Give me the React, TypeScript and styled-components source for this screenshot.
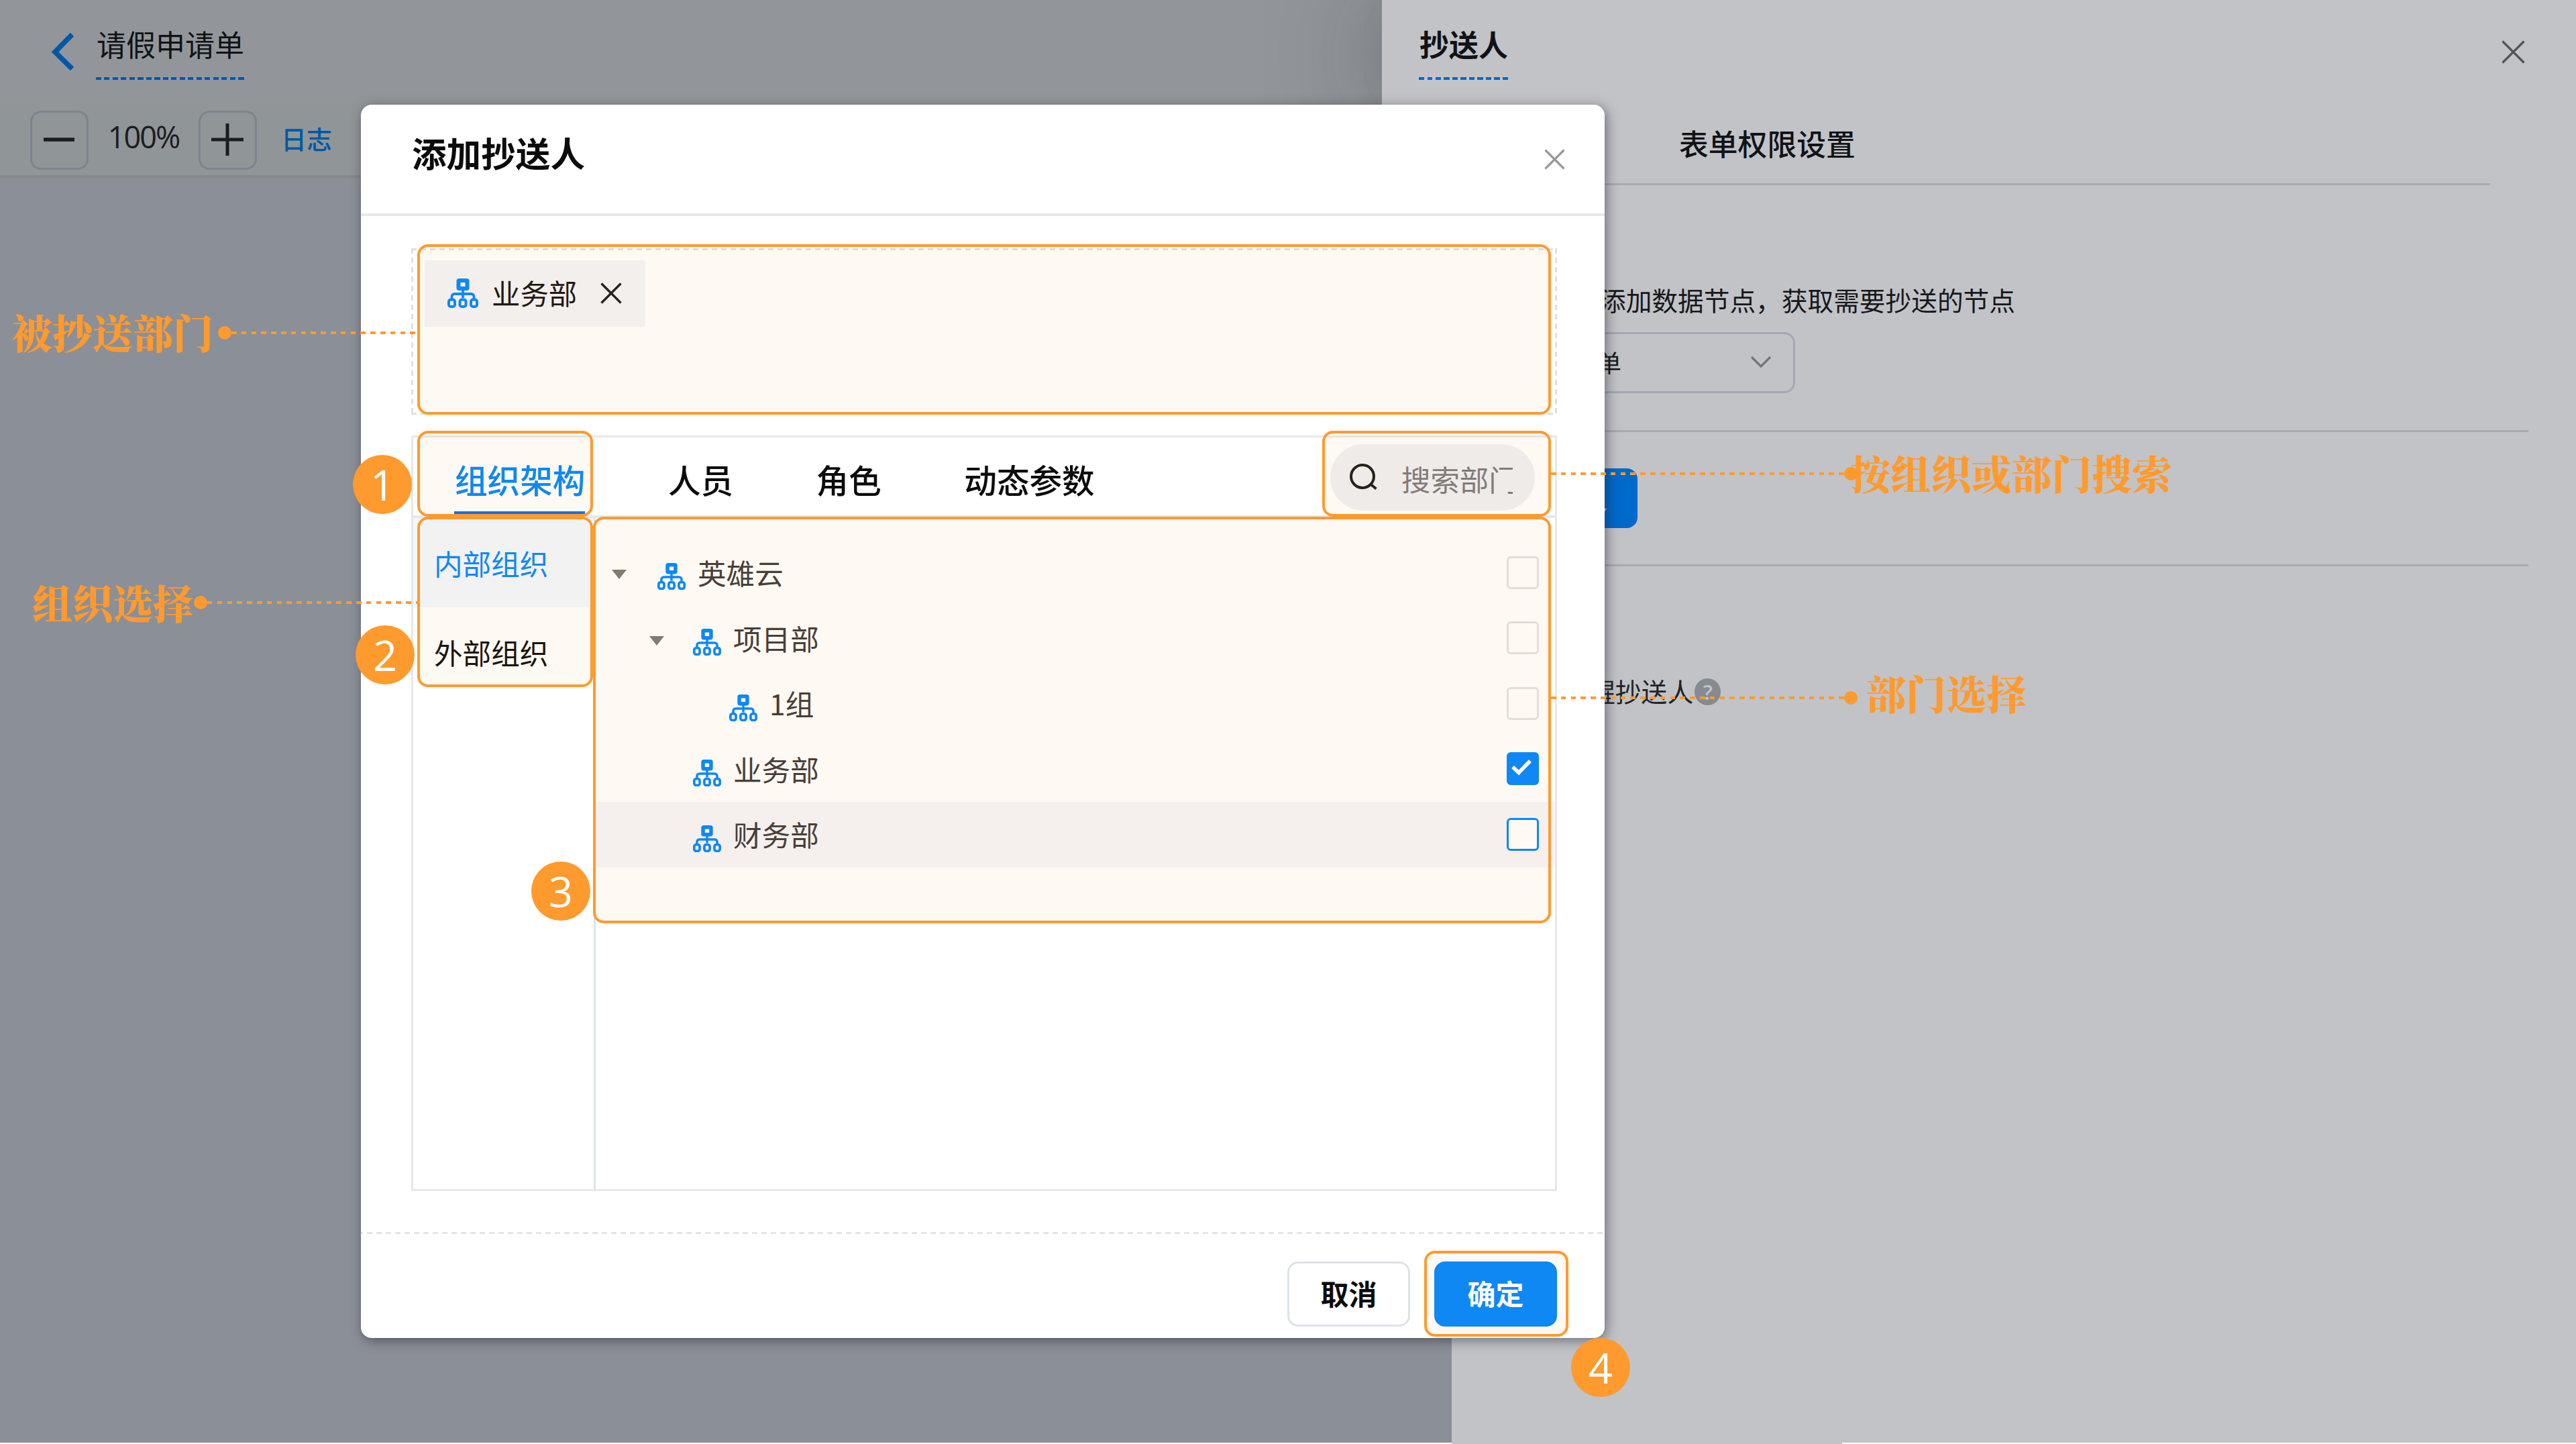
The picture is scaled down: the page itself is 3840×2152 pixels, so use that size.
import React from 'react';
import styled, { createGlobalStyle, css } from 'styled-components';

const SANS = '"Noto Sans CJK SC", "Noto Sans", sans-serif';
const LATIN = '"Open Sans", "Noto Sans", sans-serif';
const SERIF = '"Noto Serif CJK SC", "Noto Serif SC", "Source Han Serif SC", "Noto Sans CJK SC", serif';
const ORANGE = '#ff9a2e';
const BLUE = '#0087ff';

const Global = createGlobalStyle`
  * { box-sizing: border-box; }
  body { margin: 0; background: #fff; font-family: ${SANS}; overflow: hidden; }
`;

const dashedX = (color: string, on: number, off: number) =>
  `repeating-linear-gradient(90deg, ${color} 0 ${on}px, transparent ${on}px ${on + off}px)`;
const dashedY = (color: string, on: number, off: number) =>
  `repeating-linear-gradient(180deg, ${color} 0 ${on}px, transparent ${on}px ${on + off}px)`;

const Stage = styled.div`
  position: relative;
  width: 3840px;
  height: 2152px;
  overflow: hidden;
`;

/* ---------- designer page ---------- */

const Designer = styled.div`
  display: flex;
  flex-direction: column;
  height: 2150px;
  background: #8b8f97;
`;

const DesignerHeader = styled.header`
  display: flex;
  align-items: flex-start;
  height: 155px;
  padding-left: 76px;
  background: #92969a;
`;

const BackIcon = styled.svg`
  width: 34px;
  height: 58px;
  margin: 48px 33px 0 0;
`;

const EditableTitle = styled.div<{ $bold?: boolean; $color: string }>`
  height: 119px;
  padding: 39px 1px 0;
  font-size: 44px;
  line-height: 52px;
  font-weight: ${(p) => (p.$bold ? 700 : 400)};
  color: #101316;
  white-space: nowrap;
  background: ${(p) => dashedX(p.$color, 8, 4.5)} left bottom / 100% 4px no-repeat;
`;

const Toolbar = styled.div`
  display: flex;
  align-items: flex-start;
  height: 110px;
  padding: 10px 0 0 45px;
  background: #909598;
  border-bottom: 4px solid #85898c;
`;

const ZoomButton = styled.button`
  display: flex;
  align-items: center;
  justify-content: center;
  width: 87px;
  height: 88px;
  padding: 0 2px 2px 0;
  background: transparent;
  border: 3px solid #7f838d;
  border-radius: 16px;
`;

const ZoomValue = styled.span`
  width: 164px;
  font-family: ${LATIN};
  font-size: 45px;
  letter-spacing: -2px;
  line-height: 78px;
  text-align: center;
  color: #1a1d20;
`;

const LogLink = styled.a`
  margin-left: 36px;
  font-size: 38px;
  line-height: 82px;
  font-weight: 500;
  color: #0057a6;
`;

/* ---------- right drawer ---------- */

const Drawer = styled.aside`
  position: absolute;
  top: 0;
  right: 0;
  display: flex;
  flex-direction: column;
  width: 1780px;
  height: 2152px;
`;

const DrawerHead = styled.div`
  display: flex;
  justify-content: space-between;
  align-items: flex-start;
  flex: none;
  height: 160px;
  padding: 0 76px 0 55px;
  background: #c2c3c7;
  box-shadow: 0 0 170px rgba(20, 20, 30, 0.38);
`;

const DrawerBody = styled.div`
  display: flex;
  flex-direction: column;
  flex: none;
  height: 1990px;
  margin-left: 104px;
  padding-right: 71px;
  background: #c2c3c7;
`;

const DrawerEdge = styled.div`
  flex: none;
  width: 582px;
  height: 2px;
  margin-left: 104px;
  background: #c2c3c7;
`;

const DrawerTabs = styled.div`
  height: 116px;
  margin-right: 57px;
  padding: 23px 0 0 339px;
  border-bottom: 3px solid #a8aaaf;
  font-size: 43.8px;
  line-height: 60px;
  font-weight: 500;
  color: #101316;
`;

const DrawerSection = styled.section<{ $height: number; $line?: boolean }>`
  height: ${(p) => p.$height}px;
  ${(p) => p.$line && css`border-bottom: 3px solid #a7aab4;`}
`;

const Hint = styled.p`
  margin: 0;
  padding: 140px 0 0 221px;
  font-size: 38.7px;
  line-height: 60px;
  color: #15181b;
  white-space: nowrap;
`;

const SelectBox = styled.div`
  display: flex;
  align-items: center;
  justify-content: space-between;
  width: 512px;
  height: 91px;
  margin-top: 19px;
  padding: 0 32px 3px 214px;
  border: 3px solid #a3a8b2;
  border-radius: 16px;
  font-size: 36px;
  color: #15181b;
`;

const AddButton = styled.button`
  width: 277px;
  height: 89px;
  margin: 54px 0 0;
  padding: 0 45px 0 0;
  border: 0;
  border-radius: 16px;
  background: #0069cc;
  font: 500 38px ${SANS};
  color: #b9c6d4;
  text-align: right;
`;

const RemindRow = styled.div`
  display: flex;
  align-items: center;
  padding: 155px 0 0 205px;
  font-size: 38.8px;
  line-height: 60px;
  color: #202327;
`;

const HelpDot = styled.span`
  display: flex;
  align-items: center;
  justify-content: center;
  width: 39px;
  height: 40px;
  margin: 3px 0 0 2px;
  border-radius: 50%;
  background: #868b92;
  font: 600 31px ${LATIN};
  color: #c2c3c7;
`;

/* ---------- modal ---------- */

const Modal = styled.div`
  position: absolute;
  left: 538px;
  top: 156px;
  display: flex;
  flex-direction: column;
  width: 1854px;
  height: 1838px;
  background: #fff;
  border-radius: 16px;
  box-shadow: 3px 4px 18px rgba(30, 28, 40, 0.5);
`;

const ModalHead = styled.div`
  display: flex;
  justify-content: space-between;
  align-items: flex-start;
  height: 166px;
  padding: 0 59px 0 76px;
  border-bottom: 4px solid #e8e8e8;
`;

const ModalTitle = styled.h1`
  margin: 41px 0 0;
  font-size: 51.6px;
  line-height: 60px;
  font-weight: 700;
  color: #0c0c0c;
`;

const CloseIcon = styled.svg<{ $size: number; $top: number; $color: string; $weight: number }>`
  flex: none;
  width: ${(p) => p.$size}px;
  height: ${(p) => p.$size}px;
  margin-top: ${(p) => p.$top}px;
  stroke: ${(p) => p.$color};
  stroke-width: ${(p) => p.$weight};
  fill: none;
`;

const ModalBody = styled.div`
  display: flex;
  flex-direction: column;
  height: 1514px;
  padding: 48px 71px 0 75px;
`;

const SelectedBox = styled.div`
  display: flex;
  align-items: flex-start;
  height: 248px;
  padding: 18px 20px;
  background:
    ${dashedX('#e0e0e0', 8, 6)} left top / 100% 3px no-repeat,
    ${dashedX('#e0e0e0', 8, 6)} left bottom / 100% 3px no-repeat,
    ${dashedY('#e0e0e0', 8, 6)} left top / 3px 100% no-repeat,
    ${dashedY('#e0e0e0', 8, 6)} right top / 3px 100% no-repeat;
`;

const Tag = styled.div`
  display: flex;
  align-items: center;
  height: 99px;
  padding: 0 35px 1px 34px;
  background: #f3f5f9;
  font-size: 42.4px;
  color: #111;
`;

const TagText = styled.span`
  margin: -3px 35px 0 20px;
`;

const Picker = styled.div`
  display: flex;
  flex-direction: column;
  height: 1126px;
  margin-top: 31px;
  border: 3px solid #e8e8e8;
`;

const TabBar = styled.div`
  display: flex;
  align-items: flex-start;
  flex: none;
  height: 120px;
  padding: 0 30px 0 61px;
  border-bottom: 4px solid #e4e8ee;
`;

const Tab = styled.div<{ $active?: boolean }>`
  height: 115px;
  margin-right: 122.5px;
  padding: 38px 0 0 1px;
  font-size: 48.6px;
  line-height: 48px;
  font-weight: 500;
  color: ${(p) => (p.$active ? BLUE : '#0c0c0c')};
  border-bottom: 5px solid ${(p) => (p.$active ? '#0071f2' : 'transparent')};
  white-space: nowrap;
`;

const SearchPill = styled.div`
  display: flex;
  align-items: flex-start;
  width: 305px;
  height: 99px;
  margin: 10px 0 0 auto;
  padding: 28px 0 0 28px;
  border-radius: 50px;
  background: #eff1f5;
`;

const SearchText = styled.span`
  width: 166px;
  margin-left: 36px;
  overflow: hidden;
  font-size: 43.4px;
  line-height: 52px;
  margin-top: -3px;
  color: #7b7b7d;
  white-space: nowrap;
`;

const PickerBody = styled.div`
  display: flex;
  flex: 1;
`;

const SideNav = styled.nav`
  width: 272px;
  border-right: 3px solid #dde3ea;
`;

const SideItem = styled.div<{ $active?: boolean }>`
  height: 133px;
  padding-left: 31px;
  font-size: 42.6px;
  line-height: 133px;
  color: ${(p) => (p.$active ? BLUE : '#0c0c0c')};
  background: ${(p) => (p.$active ? '#f2f8fe' : 'transparent')};
`;

const Tree = styled.div`
  flex: 1;
  padding-top: 33px;
`;

const TreeRow = styled.div<{ $level: number; $hover?: boolean }>`
  display: flex;
  align-items: center;
  height: 97.5px;
  padding: 0 24px 0 ${(p) => 24 + p.$level * 54}px;
  background: ${(p) => (p.$hover ? '#f5f6fa' : 'transparent')};
`;

const ArrowSlot = styled.span<{ $nested?: boolean }>`
  display: flex;
  width: ${(p) => (p.$nested ? 67 : 68)}px;
  padding: ${(p) => (p.$nested ? '8px 0 0 2px' : '4px 0 0')};
`;

const Caret = styled.i`
  border: 11.5px solid transparent;
  border-top: 14px solid #7c7976;
  border-bottom: 0;
`;

const TreeLabel = styled.span`
  flex: 1;
  margin: -2px 0 0 18px;
  font-size: 42.6px;
  color: #3c3a3a;
`;

const OrgSvg = styled.svg<{ $w: number; $drop: number }>`
  flex: none;
  width: ${(p) => p.$w}px;
  height: ${(p) => (p.$w * 44) / 46}px;
  margin-top: ${(p) => p.$drop}px;
  fill: none;
  stroke: ${BLUE};
`;

const Check = styled.span<{ $state: 'off' | 'on' | 'hover' }>`
  display: flex;
  align-items: center;
  justify-content: center;
  width: 48px;
  height: 49px;
  margin-top: -1px;
  padding: 0 2px 2px 0;
  border: 3px solid ${(p) => (p.$state === 'off' ? '#e2e2e6' : BLUE)};
  border-radius: 6px;
  background: ${(p) => (p.$state === 'on' ? BLUE : '#fff')};
`;

const ModalFoot = styled.div`
  display: flex;
  justify-content: flex-end;
  gap: 36px;
  height: 158px;
  padding: 44px 71px 0 0;
  background: ${dashedX('#e4e4e4', 8, 6)} -5px 0 / calc(100% + 14px) 3px no-repeat;
`;

const Button = styled.button<{ $primary?: boolean }>`
  width: 183px;
  height: 97px;
  padding: 0 0 5px;
  border: 3px solid ${(p) => (p.$primary ? BLUE : '#dde1e8')};
  border-radius: 16px;
  background: ${(p) => (p.$primary ? BLUE : '#fff')};
  color: ${(p) => (p.$primary ? '#fff' : '#0c0c0c')};
  font: 700 42px ${SANS};
`;

/* ---------- guide annotations ---------- */

const Frame = styled.div<{ $x: number; $y: number; $w: number; $h: number }>`
  position: absolute;
  left: ${(p) => p.$x}px;
  top: ${(p) => p.$y}px;
  width: ${(p) => p.$w}px;
  height: ${(p) => p.$h}px;
  border: 4px solid ${ORANGE};
  border-radius: 16px;
  background: rgba(255, 154, 46, 0.06);
`;

const Step = styled.div<{ $x: number; $y: number }>`
  position: absolute;
  left: ${(p) => p.$x}px;
  top: ${(p) => p.$y}px;
  width: 88px;
  height: 88px;
  border-radius: 50%;
  background: ${ORANGE};
  font: 400 63px/87px ${LATIN};
  color: #fff;
  text-align: center;
`;

const Callout = styled.div<{ $x: number; $y: number }>`
  position: absolute;
  left: ${(p) => p.$x}px;
  top: ${(p) => p.$y}px;
  font: 900 60px/60px ${SERIF};
  color: ${ORANGE};
  white-space: nowrap;
`;

const Leader = styled.div<{ $x: number; $y: number; $w: number; $dotRight?: boolean }>`
  position: absolute;
  left: ${(p) => p.$x}px;
  top: ${(p) => p.$y}px;
  display: flex;
  flex-direction: ${(p) => (p.$dotRight ? 'row-reverse' : 'row')};
  align-items: center;
  width: ${(p) => p.$w}px;
  height: 20px;

  &::before {
    content: '';
    width: 20px;
    height: 20px;
    border-radius: 50%;
    background: ${ORANGE};
  }
  &::after {
    content: '';
    flex: 1;
    height: 4px;
    background: ${dashedX(ORANGE, 7.5, 7.3)};
  }
`;

const OrgIcon = ({ w, drop = 0 }: { w: number; drop?: number }) => (
  <OrgSvg $w={w} $drop={drop} viewBox="0 0 46 44">
    <rect x="16.5" y="3" width="13" height="12" rx="1" strokeWidth="6" />
    <path d="M23 17v12M6.5 30v-3a4 4 0 0 1 4-4h25a4 4 0 0 1 4 4v3" strokeWidth="3.8" />
    <rect x="2" y="31.5" width="9" height="10.5" rx="3" strokeWidth="4" />
    <rect x="18.5" y="31.5" width="9" height="10.5" rx="3" strokeWidth="4" />
    <rect x="35" y="31.5" width="9" height="10.5" rx="3" strokeWidth="4" />
  </OrgSvg>
);

const Cross = (p: { size: number; top?: number; color: string; weight: number }) => (
  <CloseIcon $size={p.size} $top={p.top ?? 0} $color={p.color} $weight={p.weight} viewBox={`0 0 ${p.size} ${p.size}`}>
    <path d={`M1.5 1.5L${p.size - 1.5} ${p.size - 1.5}M${p.size - 1.5} 1.5L1.5 ${p.size - 1.5}`} />
  </CloseIcon>
);

type Node = { label: string; level: number; open?: boolean; check: 'off' | 'on' | 'hover' };

const nodes: Node[] = [
  { label: '英雄云', level: 0, open: true, check: 'off' },
  { label: '项目部', level: 1, open: true, check: 'off' },
  { label: '1组', level: 2, check: 'off' },
  { label: '业务部', level: 1, check: 'on' },
  { label: '财务部', level: 1, check: 'hover' },
];

export default function App() {
  return (
    <Stage>
      <Global />
      <Designer>
        <DesignerHeader>
          <BackIcon viewBox="0 0 34 58">
            <path d="M31.5 3.5L6 29.5L31.5 54.5" fill="none" stroke="#0057a6" strokeWidth="7.5" />
          </BackIcon>
          <EditableTitle $color="#0057a6">请假申请单</EditableTitle>
        </DesignerHeader>
        <Toolbar>
          <ZoomButton>
            <svg width="46" height="6"><path d="M0 3h46" stroke="#1a1d20" strokeWidth="5.5" /></svg>
          </ZoomButton>
          <ZoomValue>100%</ZoomValue>
          <ZoomButton>
            <svg width="48" height="48"><path d="M0 24h48M24 0v48" stroke="#1a1d20" strokeWidth="5" /></svg>
          </ZoomButton>
          <LogLink>日志</LogLink>
        </Toolbar>
      </Designer>

      <Drawer>
        <DrawerHead>
          <EditableTitle $bold $color="#0068c9">抄送人</EditableTitle>
          <Cross size={35} top={60} color="#50545c" weight={3.2} />
        </DrawerHead>
        <DrawerBody>
          <DrawerTabs>表单权限设置</DrawerTabs>
          <DrawerSection $height={368} $line>
            <Hint>添加数据节点，获取需要抄送的节点</Hint>
            <SelectBox>
              单
              <svg width="32" height="19">
                <path d="M2 2L16 16L30 2" fill="none" stroke="#70747b" strokeWidth="3.2" />
              </svg>
            </SelectBox>
          </DrawerSection>
          <DrawerSection $height={200} $line>
            <AddButton>人</AddButton>
          </DrawerSection>
          <RemindRow>
            醒抄送人<HelpDot>?</HelpDot>
          </RemindRow>
        </DrawerBody>
        <DrawerEdge />
      </Drawer>

      <Modal>
        <ModalHead>
          <ModalTitle>添加抄送人</ModalTitle>
          <Cross size={31} top={66} color="#97999e" weight={3.2} />
        </ModalHead>
        <ModalBody>
          <SelectedBox>
            <Tag>
              <OrgIcon w={46} />
              <TagText>业务部</TagText>
              <Cross size={32} color="#1c1b1a" weight={3.4} />
            </Tag>
          </SelectedBox>
          <Picker>
            <TabBar>
              <Tab $active>组织架构</Tab>
              <Tab>人员</Tab>
              <Tab>角色</Tab>
              <Tab>动态参数</Tab>
              <SearchPill>
                <svg width="42" height="42" viewBox="0 0 42 42" fill="none" stroke="#1c1b1a" strokeWidth="4">
                  <circle cx="20" cy="20" r="17" />
                  <path d="M32 31.5L40.5 38.5" />
                </svg>
                <SearchText>搜索部门</SearchText>
              </SearchPill>
            </TabBar>
            <PickerBody>
              <SideNav>
                <SideItem $active>内部组织</SideItem>
                <SideItem>外部组织</SideItem>
              </SideNav>
              <Tree>
                {nodes.map((n) => (
                  <TreeRow key={n.label} $level={n.level} $hover={n.check === 'hover'}>
                    <ArrowSlot $nested={n.level > 0}>{n.open && <Caret />}</ArrowSlot>
                    <OrgIcon w={42} drop={n.level ? 12 : 10} />
                    <TreeLabel>{n.label}</TreeLabel>
                    <Check $state={n.check}>
                      {n.check === 'on' && (
                        <svg width="36" height="30" viewBox="0 0 36 30">
                          <path d="M4 13L13 21.5L30 4" fill="none" stroke="#fff" strokeWidth="5.6" />
                        </svg>
                      )}
                    </Check>
                  </TreeRow>
                ))}
              </Tree>
            </PickerBody>
          </Picker>
        </ModalBody>
        <ModalFoot>
          <Button>取消</Button>
          <Button $primary>确定</Button>
        </ModalFoot>
      </Modal>

      <Frame $x={622} $y={364} $w={1690} $h={254} />
      <Frame $x={622} $y={642} $w={262} $h={128} />
      <Frame $x={1971} $y={642} $w={341} $h={128} />
      <Frame $x={622} $y={770} $w={262} $h={254} />
      <Frame $x={884} $y={770} $w={1428} $h={606} />
      <Frame $x={2123} $y={1864} $w={215} $h={128} />

      <Leader $x={325} $y={486} $w={297} />
      <Leader $x={289} $y={888} $w={333} />
      <Leader $x={2312} $y={696} $w={457} $dotRight />
      <Leader $x={2312} $y={1030} $w={457} $dotRight />

      <Callout $x={18} $y={464}>被抄送部门</Callout>
      <Callout $x={48} $y={867}>组织选择</Callout>
      <Callout $x={2758} $y={674}>按组织或部门搜索</Callout>
      <Callout $x={2781} $y={1002}>部门选择</Callout>

      <Step $x={526} $y={678}>1</Step>
      <Step $x={530} $y={932}>2</Step>
      <Step $x={792} $y={1284}>3</Step>
      <Step $x={2342} $y={1994}>4</Step>
    </Stage>
  );
}
